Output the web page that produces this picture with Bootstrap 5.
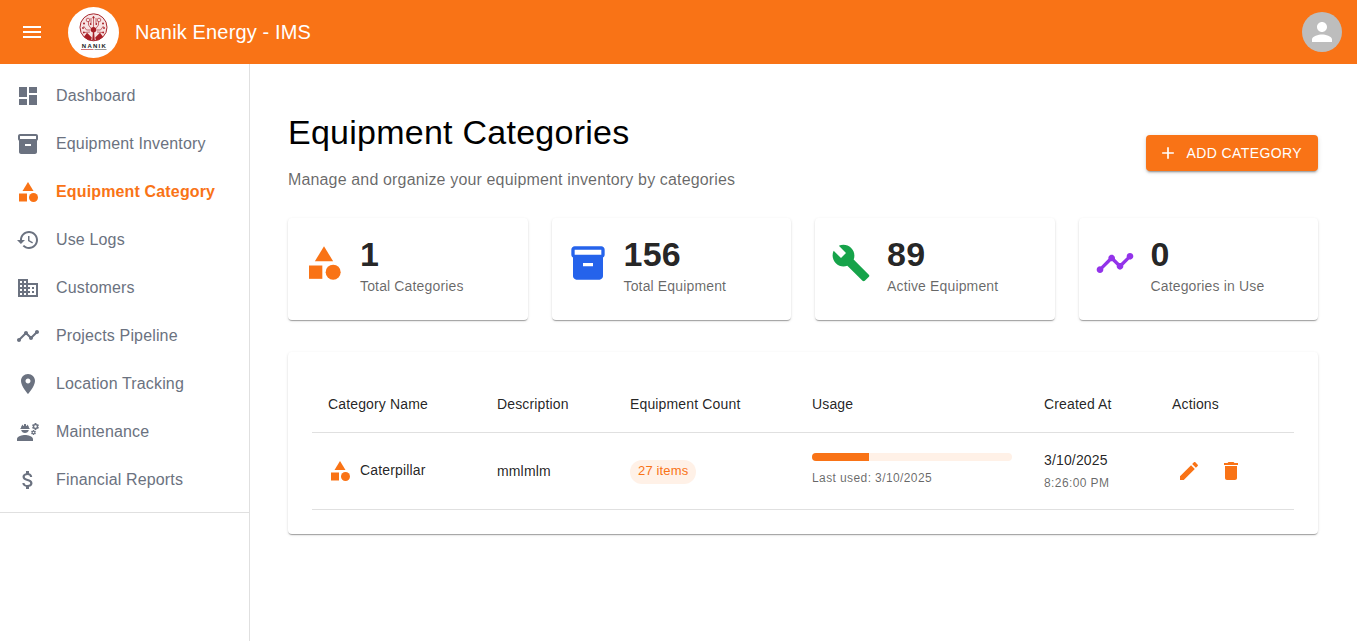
<!DOCTYPE html>
<html lang="en">
<head>
<meta charset="utf-8">
<meta name="viewport" content="width=device-width, initial-scale=1">
<title>Nanik Energy - IMS</title>
<link href="https://cdn.jsdelivr.net/npm/bootstrap@5.3.0/dist/css/bootstrap.min.css" rel="stylesheet">
<style>
:root{--brand:#f97316;--line:#e0e0e0;--ink:rgba(0,0,0,.87);--soft:rgba(0,0,0,.6)}
body{font-family:"Liberation Sans",Arial,sans-serif;font-size:16px;letter-spacing:.15px;color:var(--ink);background:#fff}
.icon{width:24px;height:24px;fill:currentColor;flex:none;display:block}
.icon-xl{width:40px;height:40px;margin-bottom:4px}
.tone-orange{color:var(--brand)}
.tone-blue{color:#2563eb}
.tone-green{color:#16a34a}
.tone-purple{color:#9333ea}
.topbar{height:64px;background:var(--brand);padding:0 15px 0 20px}
.logo{width:51px;height:51px;margin:1px 16px 0 24px;flex:none}
.app-title{font-size:20px;line-height:32px;font-weight:400}
.avatar{width:40px;height:40px;background:#bdbdbd}
.avatar .icon{width:30px;height:30px}
.shell{height:577px}
.side{width:250px;border-right:1px solid var(--line)}
.side .nav{padding:8px 0;border-bottom:1px solid var(--line)}
.side .nav-link{height:48px;padding:0 16px;gap:16px;color:#6b7280;line-height:24px}
.side .nav-link span{margin-top:-1px}
.side .nav-link.active{color:var(--brand);font-weight:700}
.page{padding:48px 39px 0 38px}
.page-head{height:82px;margin-bottom:24px}
.page-title{font-size:34px;line-height:42px;font-weight:400;letter-spacing:.25px;color:#000;margin:-1px 0 15px}
.muted{color:var(--soft)}
.btn-add{--bs-btn-color:#fff;--bs-btn-bg:var(--brand);--bs-btn-hover-bg:#ea580c;--bs-btn-hover-color:#fff;border:0;border-radius:4px;font-size:14px;line-height:24.5px;letter-spacing:.4px;padding:6px 16px 6px 12px;gap:8px;box-shadow:0 3px 1px -2px rgba(0,0,0,.2),0 2px 2px rgba(0,0,0,.14),0 1px 5px rgba(0,0,0,.12)}
.btn-add .icon{width:20px;height:20px}
.paper{border:0;border-radius:4px;box-shadow:0 2px 1px -1px rgba(0,0,0,.2),0 1px 1px rgba(0,0,0,.14),0 1px 3px rgba(0,0,0,.12)}
.stats{display:grid;grid-template-columns:repeat(4,1fr);gap:24px;margin-bottom:32px}
.stat{height:102px;padding:16px 16px 24px}
.stat-num{font-size:34px;line-height:40px;padding-bottom:2px;font-weight:700;letter-spacing:.25px}
.body-sm{font-size:14px;line-height:20px}
.caption{font-size:12px;line-height:20px;letter-spacing:.4px;color:var(--soft)}
.cat-table{table-layout:fixed;border-collapse:separate;border-spacing:0;font-size:14px;line-height:24px;margin:0;color:var(--ink);--bs-table-color:var(--ink);border-color:var(--line)}
.cat-table>:not(caption)>*>*{padding:16px;border-bottom:1px solid var(--line);vertical-align:middle}
.cat-table th{font-weight:400;height:57px}
.cat-table td{height:77px;padding-top:12px;padding-bottom:12px}
.cat-name{margin-bottom:2px}
.chip{display:inline-flex;align-items:center;height:24px;border-radius:12px;padding:0 8px 1px;font-size:13px;background:#fff1e7;color:var(--brand);vertical-align:middle}
.usage{width:200px;height:8px;border-radius:4px;background:#fff1e7}
.usage .progress-bar{background:var(--brand)}
.usage-note{padding:7px 0 1px}
.created-time{padding-top:3px}
.icon-btn{padding:5px;border:0;background:none;color:var(--brand)}
</style>
</head>
<body class="overflow-hidden">
<svg class="d-none" xmlns="http://www.w3.org/2000/svg">
  <symbol id="i-menu" viewBox="0 0 24 24"><path d="M3 18h18v-2H3v2zm0-5h18v-2H3v2zm0-7v2h18V6H3z"/></symbol>
  <symbol id="i-person" viewBox="0 0 24 24"><path d="M12 12c2.21 0 4-1.79 4-4s-1.79-4-4-4-4 1.79-4 4 1.79 4 4 4zm0 2c-2.67 0-8 1.34-8 4v2h16v-2c0-2.66-5.33-4-8-4z"/></symbol>
  <symbol id="i-dash" viewBox="0 0 24 24"><path d="M3 13h8V3H3v10zm0 8h8v-6H3v6zm10 0h8V11h-8v10zm0-18v6h8V3h-8z"/></symbol>
  <symbol id="i-box" viewBox="0 0 24 24"><path d="M20 2H4c-1 0-2 .9-2 2v3.01c0 .72.43 1.34 1 1.69V20c0 1.1 1.1 2 2 2h14c.9 0 2-.9 2-2V8.7c.57-.35 1-.97 1-1.69V4c0-1.1-1-2-2-2zm-5 12H9v-2h6v2zm5-7H4V4h16v3z"/></symbol>
  <symbol id="i-cat" viewBox="0 0 24 24"><path d="m12 2-5.500 9h11z"/><circle cx="17.500" cy="17.500" r="4.500"/><path d="M3 13.500h8v8H3z"/></symbol>
  <symbol id="i-history" viewBox="0 0 24 24"><path d="M13 3c-4.970 0-9 4.030-9 9H1l3.890 3.890.070.140L9 12H6c0-3.870 3.130-7 7-7s7 3.130 7 7-3.130 7-7 7c-1.930 0-3.680-.790-4.940-2.060l-1.420 1.420C8.270 19.990 10.510 21 13 21c4.970 0 9-4.030 9-9s-4.030-9-9-9zm-1 5v5l4.280 2.540.720-1.210-3.500-2.080V8H12z"/></symbol>
  <symbol id="i-biz" viewBox="0 0 24 24"><path d="M12 7V3H2v18h20V7H12zM6 19H4v-2h2v2zm0-4H4v-2h2v2zm0-4H4V9h2v2zm0-4H4V5h2v2zm4 12H8v-2h2v2zm0-4H8v-2h2v2zm0-4H8V9h2v2zm0-4H8V5h2v2zm10 12h-8v-2h2v-2h-2v-2h2v-2h-2V9h8v10zm-2-8h-2v2h2v-2zm0 4h-2v2h2v-2z"/></symbol>
  <symbol id="i-timeline" viewBox="0 0 24 24"><path d="M23 8c0 1.100-.900 2-2 2-.180 0-.350-.020-.510-.070l-3.560 3.550c.050.160.070.340.070.520 0 1.100-.900 2-2 2s-2-.900-2-2c0-.180.020-.360.070-.520l-2.550-2.550c-.160.050-.340.070-.520.070s-.360-.020-.520-.070l-4.550 4.560c.050.160.070.330.070.510 0 1.100-.900 2-2 2s-2-.900-2-2 .900-2 2-2c.180 0 .350.020.510.070l4.560-4.550C8.020 9.360 8 9.180 8 9c0-1.100.900-2 2-2s2 .900 2 2c0 .180-.020.360-.070.520l2.550 2.550c.160-.050.340-.070.520-.070s.360.020.520.070l3.550-3.560C19.020 8.350 19 8.180 19 8c0-1.100.900-2 2-2s2 .900 2 2z"/></symbol>
  <symbol id="i-pin" viewBox="0 0 24 24"><path d="M12 2C8.130 2 5 5.130 5 9c0 5.250 7 13 7 13s7-7.750 7-13c0-3.870-3.130-7-7-7zm0 9.500c-1.380 0-2.500-1.120-2.500-2.500s1.120-2.500 2.500-2.500 2.500 1.120 2.500 2.500-1.120 2.500-2.500 2.500z"/></symbol>
  <symbol id="i-eng" viewBox="0 0 24 24"><path d="M9 15c-2.670 0-8 1.340-8 4v2h16v-2c0-2.660-5.330-4-8-4m13.100-8.160c.01-.11.02-.22.02-.34 0-.12-.01-.23-.03-.34l.74-.58c.07-.05.08-.15.04-.22l-.7-1.210c-.04-.08-.14-.1-.21-.08l-.86.35c-.18-.14-.38-.25-.59-.34l-.13-.93c-.02-.09-.09-.15-.18-.15h-1.400c-.09 0-.16.06-.17.15l-.13.93c-.21.09-.41.21-.59.34l-.87-.35c-.08-.03-.17 0-.21.08l-.7 1.210c-.04.08-.03.17.04.22l.74.58c-.02.11-.03.23-.03.34 0 .11.01.23.03.34l-.74.58c-.07.05-.08.15-.04.22l.7 1.210c.04.08.14.1.21.08l.87-.35c.18.14.38.25.59.34l.13.93c.01.09.08.15.17.15h1.400c.09 0 .16-.06.17-.15l.13-.93c.21-.09.41-.21.59-.34l.87.35c.08.03.17 0 .21-.08l.7-1.210c.04-.08.03-.17-.04-.22zm-2.600.91c-.69 0-1.250-.56-1.250-1.250s.56-1.250 1.250-1.250 1.250.56 1.250 1.250-.56 1.250-1.250 1.250m.42 3.930-.5-.87c-.03-.06-.1-.08-.15-.06l-.62.25c-.13-.1-.27-.18-.42-.24l-.09-.66c-.02-.06-.08-.1-.14-.1h-1c-.06 0-.11.04-.12.11l-.09.66c-.15.06-.29.15-.42.24l-.62-.25c-.06-.02-.12 0-.15.06l-.5.87c-.03.06-.02.12.03.16l.53.41c-.01.08-.02.16-.02.24 0 .08.01.17.02.24l-.53.41c-.05.04-.06.11-.03.16l.5.87c.03.06.1.08.15.06l.62-.25c.13.1.27.18.42.24l.09.66c.01.07.06.11.12.11h1c.06 0 .12-.04.12-.11l.09-.66c.15-.06.29-.15.42-.24l.62.25c.06.02.12 0 .15-.06l.5-.87c.03-.06.02-.12-.03-.16l-.52-.41c.01-.08.02-.16.02-.24 0-.08-.01-.17-.02-.24l.53-.41c.05-.04.06-.11.04-.17m-2.420 1.650c-.46 0-.83-.38-.83-.83 0-.46.38-.83.83-.83s.83.38.83.83c0 .46-.37.83-.83.83M4.740 9h8.530c.27 0 .49-.22.49-.49v-.02c0-.27-.22-.49-.49-.49H13c0-1.480-.81-2.750-2-3.450v.95c0 .28-.22.5-.5.5s-.5-.22-.5-.5V4.140C9.680 4.060 9.350 4 9 4s-.68.06-1 .14V5.500c0 .28-.22.5-.5.5S7 5.780 7 5.500v-.95C5.810 5.250 5 6.520 5 8h-.26c-.27 0-.49.22-.49.49v.03c0 .26.22.48.49.48M9 13c1.860 0 3.410-1.280 3.860-3H5.140c.45 1.720 2 3 3.860 3"/></symbol>
  <symbol id="i-money" viewBox="0 0 24 24"><path d="M11.800 10.900c-2.270-.590-3-1.200-3-2.150 0-1.090 1.010-1.850 2.700-1.850 1.780 0 2.440.850 2.500 2.100h2.210c-.070-1.720-1.120-3.300-3.210-3.810V3h-3v2.160c-1.940.420-3.500 1.680-3.500 3.610 0 2.310 1.910 3.460 4.700 4.130 2.500.600 3 1.480 3 2.410 0 .690-.490 1.790-2.700 1.790-2.060 0-2.870-.920-2.980-2.100h-2.200c.120 2.190 1.760 3.420 3.680 3.830V21h3v-2.150c1.950-.370 3.500-1.500 3.500-3.550 0-2.840-2.430-3.810-4.700-4.400z"/></symbol>
  <symbol id="i-build" viewBox="0 0 24 24"><path d="m22.700 19-9.100-9.100c.9-2.300.4-5-1.500-6.900-2-2-5-2.400-7.400-1.300L9 6 6 9 1.600 4.700C.4 7.100.9 10.100 2.900 12.100c1.900 1.900 4.600 2.400 6.900 1.500l9.100 9.100c.4.4 1 .4 1.400 0l2.300-2.300c.5-.4.5-1.100.1-1.400z"/></symbol>
  <symbol id="i-add" viewBox="0 0 24 24"><path d="M19 13h-6v6h-2v-6H5v-2h6V5h2v6h6v2z"/></symbol>
  <symbol id="i-edit" viewBox="0 0 24 24"><path d="M3 17.250V21h3.750L17.810 9.940l-3.750-3.750L3 17.250zM20.710 7.040c.39-.39.39-1.020 0-1.410l-2.340-2.340c-.39-.39-1.020-.39-1.410 0l-1.830 1.830 3.750 3.750 1.830-1.830z"/></symbol>
  <symbol id="i-del" viewBox="0 0 24 24"><path d="M6 19c0 1.100.9 2 2 2h8c1.100 0 2-.9 2-2V7H6v12zM19 4h-3.500l-1-1h-5l-1 1H5v2h14V4z"/></symbol>
</svg>

<header class="topbar d-flex align-items-center text-white">
  <svg class="icon"><use href="#i-menu"/></svg>
  <svg class="logo" viewBox="0 0 51 51">
    <circle cx="25.500" cy="25.500" r="25.500" fill="#fff"/>
    <circle cx="25.500" cy="20.300" r="13.500" fill="#f7e3e3" stroke="#a8262d" stroke-width="1"/>
    <g stroke="#b8454a" fill="none" stroke-width=".8">
      <path d="M25.500 22V9M23.500 22l-3-4v-4M27.500 22l3-4v-4M22.500 23h-4l-3-4M28.500 23h4l3-4M22 25l-6 .5M29 25l6 .5M23 16v-5M28 16v-5"/>
      <circle cx="20" cy="13" r="1.800"/><circle cx="31" cy="13" r="1.800"/>
    </g>
    <g fill="#a81f27">
      <circle cx="25.500" cy="22.700" r="2.700"/>
      <path d="M25 24h1l.8 9.500h-2.600zM16 29.800l3-4 4.800 4.800-.8 2.900c-2.900-.4-5.400-1.700-7-3.700zM35 29.800l-3-4-4.800 4.800.8 2.900c2.900-.4 5.400-1.700 7-3.700z"/>
      <circle cx="25.500" cy="10.500" r="1.100"/><circle cx="16" cy="16.500" r="1"/><circle cx="35" cy="16.500" r="1"/><circle cx="15" cy="21" r=".9"/><circle cx="36" cy="21" r=".9"/><circle cx="15.800" cy="25.500" r=".9"/><circle cx="35.200" cy="25.500" r=".9"/><circle cx="22.700" cy="17" r=".9"/><circle cx="28.300" cy="17" r=".9"/>
    </g>
    <text x="13.800" y="40.800" textLength="24" font-size="6" font-weight="700" fill="#222" letter-spacing="0">NANIK</text>
    <path d="M13 42.500h12.500" stroke="#cf7679" stroke-width="1"/><path d="M26.500 42.500H38.500" stroke="#999" stroke-width="1"/>
  </svg>
  <h1 class="app-title m-0">Nanik Energy - IMS</h1>
  <div class="avatar rounded-circle d-flex align-items-center justify-content-center ms-auto"><svg class="icon"><use href="#i-person"/></svg></div>
</header>

<div class="shell d-flex">
  <aside class="side flex-shrink-0">
    <nav class="nav flex-column flex-nowrap">
      <a class="nav-link d-flex align-items-center" href="#"><svg class="icon"><use href="#i-dash"/></svg><span>Dashboard</span></a>
      <a class="nav-link d-flex align-items-center" href="#"><svg class="icon"><use href="#i-box"/></svg><span>Equipment Inventory</span></a>
      <a class="nav-link d-flex align-items-center active" href="#"><svg class="icon"><use href="#i-cat"/></svg><span>Equipment Category</span></a>
      <a class="nav-link d-flex align-items-center" href="#"><svg class="icon"><use href="#i-history"/></svg><span>Use Logs</span></a>
      <a class="nav-link d-flex align-items-center" href="#"><svg class="icon"><use href="#i-biz"/></svg><span>Customers</span></a>
      <a class="nav-link d-flex align-items-center" href="#"><svg class="icon"><use href="#i-timeline"/></svg><span>Projects Pipeline</span></a>
      <a class="nav-link d-flex align-items-center" href="#"><svg class="icon"><use href="#i-pin"/></svg><span>Location Tracking</span></a>
      <a class="nav-link d-flex align-items-center" href="#"><svg class="icon"><use href="#i-eng"/></svg><span>Maintenance</span></a>
      <a class="nav-link d-flex align-items-center" href="#"><svg class="icon"><use href="#i-money"/></svg><span>Financial Reports</span></a>
    </nav>
  </aside>

  <main class="page flex-grow-1">
    <div class="page-head d-flex justify-content-between align-items-center">
      <div class="align-self-start">
        <h2 class="page-title">Equipment Categories</h2>
        <p class="muted m-0">Manage and organize your equipment inventory by categories</p>
      </div>
      <button class="btn btn-add d-flex align-items-center text-uppercase"><svg class="icon"><use href="#i-add"/></svg>Add Category</button>
    </div>

    <div class="stats">
      <div class="card paper stat flex-row align-items-center gap-3">
        <svg class="icon icon-xl tone-orange"><use href="#i-cat"/></svg>
        <div><div class="stat-num">1</div><div class="body-sm muted">Total Categories</div></div>
      </div>
      <div class="card paper stat flex-row align-items-center gap-3">
        <svg class="icon icon-xl tone-blue"><use href="#i-box"/></svg>
        <div><div class="stat-num">156</div><div class="body-sm muted">Total Equipment</div></div>
      </div>
      <div class="card paper stat flex-row align-items-center gap-3">
        <svg class="icon icon-xl tone-green"><use href="#i-build"/></svg>
        <div><div class="stat-num">89</div><div class="body-sm muted">Active Equipment</div></div>
      </div>
      <div class="card paper stat flex-row align-items-center gap-3">
        <svg class="icon icon-xl tone-purple"><use href="#i-timeline"/></svg>
        <div><div class="stat-num">0</div><div class="body-sm muted">Categories in Use</div></div>
      </div>
    </div>

    <div class="card paper p-4">
      <table class="table cat-table">
        <colgroup><col style="width:169px"><col style="width:133px"><col style="width:182px"><col style="width:232px"><col style="width:128px"><col style="width:138px"></colgroup>
        <thead><tr><th>Category Name</th><th>Description</th><th>Equipment Count</th><th>Usage</th><th>Created At</th><th>Actions</th></tr></thead>
        <tbody>
          <tr>
            <td><div class="d-flex align-items-center gap-2"><svg class="icon tone-orange"><use href="#i-cat"/></svg><span class="body-sm cat-name">Caterpillar</span></div></td>
            <td>mmlmlm</td>
            <td><span class="chip">27 items</span></td>
            <td><div class="progress usage"><div class="progress-bar" style="width:28.5%"></div></div><div class="caption usage-note">Last used: 3/10/2025</div></td>
            <td><div class="body-sm">3/10/2025</div><div class="caption created-time">8:26:00 PM</div></td>
            <td><div class="d-flex gap-2"><button class="icon-btn"><svg class="icon"><use href="#i-edit"/></svg></button><button class="icon-btn"><svg class="icon"><use href="#i-del"/></svg></button></div></td>
          </tr>
        </tbody>
      </table>
    </div>
  </main>
</div>
<script src="https://cdn.jsdelivr.net/npm/bootstrap@5.3.0/dist/js/bootstrap.bundle.min.js"></script>
</body>
</html>
